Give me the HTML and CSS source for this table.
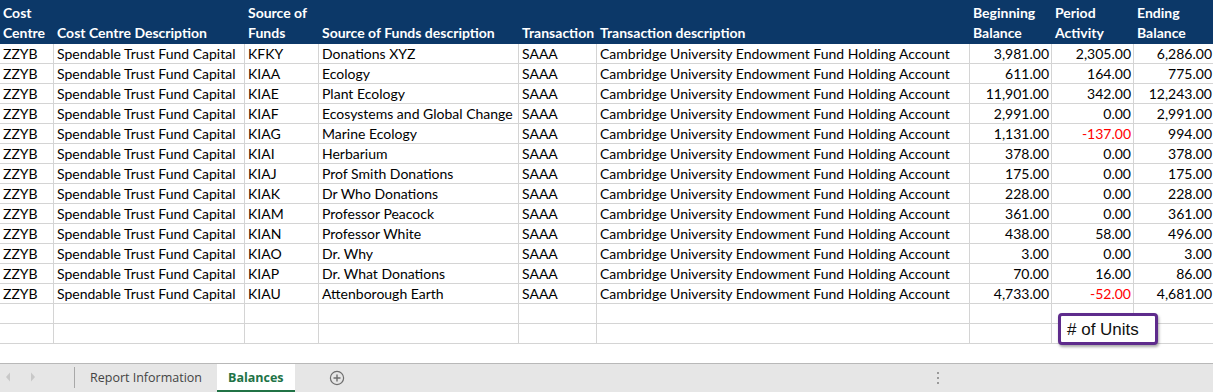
FILE: index.html
```html
<!DOCTYPE html>
<html>
<head>
<meta charset="utf-8">
<link rel="stylesheet" href="styles.css">
</head>
<body>
<div class="app">
  <div class="grid">
    <div class="row head">
      <div class="c">Cost<br>Centre</div>
      <div class="c">Cost Centre Description</div>
      <div class="c">Source of<br>Funds</div>
      <div class="c">Source of Funds description</div>
      <div class="c">Transaction</div>
      <div class="c">Transaction description</div>
      <div class="c">Beginning<br>Balance</div>
      <div class="c">Period<br>Activity</div>
      <div class="c">Ending<br>Balance</div>
    </div>
    <div class="row"><div class="c">ZZYB</div><div class="c">Spendable Trust Fund Capital</div><div class="c">KFKY</div><div class="c">Donations XYZ</div><div class="c">SAAA</div><div class="c">Cambridge University Endowment Fund Holding Account</div><div class="c n">3,981.00</div><div class="c n">2,305.00</div><div class="c n">6,286.00</div></div>
    <div class="row"><div class="c">ZZYB</div><div class="c">Spendable Trust Fund Capital</div><div class="c">KIAA</div><div class="c">Ecology</div><div class="c">SAAA</div><div class="c">Cambridge University Endowment Fund Holding Account</div><div class="c n">611.00</div><div class="c n">164.00</div><div class="c n">775.00</div></div>
    <div class="row"><div class="c">ZZYB</div><div class="c">Spendable Trust Fund Capital</div><div class="c">KIAE</div><div class="c">Plant Ecology</div><div class="c">SAAA</div><div class="c">Cambridge University Endowment Fund Holding Account</div><div class="c n">11,901.00</div><div class="c n">342.00</div><div class="c n">12,243.00</div></div>
    <div class="row"><div class="c">ZZYB</div><div class="c">Spendable Trust Fund Capital</div><div class="c">KIAF</div><div class="c">Ecosystems and Global Change</div><div class="c">SAAA</div><div class="c">Cambridge University Endowment Fund Holding Account</div><div class="c n">2,991.00</div><div class="c n">0.00</div><div class="c n">2,991.00</div></div>
    <div class="row"><div class="c">ZZYB</div><div class="c">Spendable Trust Fund Capital</div><div class="c">KIAG</div><div class="c">Marine Ecology</div><div class="c">SAAA</div><div class="c">Cambridge University Endowment Fund Holding Account</div><div class="c n">1,131.00</div><div class="c n neg">-137.00</div><div class="c n">994.00</div></div>
    <div class="row"><div class="c">ZZYB</div><div class="c">Spendable Trust Fund Capital</div><div class="c">KIAI</div><div class="c">Herbarium</div><div class="c">SAAA</div><div class="c">Cambridge University Endowment Fund Holding Account</div><div class="c n">378.00</div><div class="c n">0.00</div><div class="c n">378.00</div></div>
    <div class="row"><div class="c">ZZYB</div><div class="c">Spendable Trust Fund Capital</div><div class="c">KIAJ</div><div class="c">Prof Smith Donations</div><div class="c">SAAA</div><div class="c">Cambridge University Endowment Fund Holding Account</div><div class="c n">175.00</div><div class="c n">0.00</div><div class="c n">175.00</div></div>
    <div class="row"><div class="c">ZZYB</div><div class="c">Spendable Trust Fund Capital</div><div class="c">KIAK</div><div class="c">Dr Who Donations</div><div class="c">SAAA</div><div class="c">Cambridge University Endowment Fund Holding Account</div><div class="c n">228.00</div><div class="c n">0.00</div><div class="c n">228.00</div></div>
    <div class="row"><div class="c">ZZYB</div><div class="c">Spendable Trust Fund Capital</div><div class="c">KIAM</div><div class="c">Professor Peacock</div><div class="c">SAAA</div><div class="c">Cambridge University Endowment Fund Holding Account</div><div class="c n">361.00</div><div class="c n">0.00</div><div class="c n">361.00</div></div>
    <div class="row"><div class="c">ZZYB</div><div class="c">Spendable Trust Fund Capital</div><div class="c">KIAN</div><div class="c">Professor White</div><div class="c">SAAA</div><div class="c">Cambridge University Endowment Fund Holding Account</div><div class="c n">438.00</div><div class="c n">58.00</div><div class="c n">496.00</div></div>
    <div class="row"><div class="c">ZZYB</div><div class="c">Spendable Trust Fund Capital</div><div class="c">KIAO</div><div class="c">Dr. Why</div><div class="c">SAAA</div><div class="c">Cambridge University Endowment Fund Holding Account</div><div class="c n">3.00</div><div class="c n">0.00</div><div class="c n">3.00</div></div>
    <div class="row"><div class="c">ZZYB</div><div class="c">Spendable Trust Fund Capital</div><div class="c">KIAP</div><div class="c">Dr. What Donations</div><div class="c">SAAA</div><div class="c">Cambridge University Endowment Fund Holding Account</div><div class="c n">70.00</div><div class="c n">16.00</div><div class="c n">86.00</div></div>
    <div class="row"><div class="c">ZZYB</div><div class="c">Spendable Trust Fund Capital</div><div class="c">KIAU</div><div class="c">Attenborough Earth</div><div class="c">SAAA</div><div class="c">Cambridge University Endowment Fund Holding Account</div><div class="c n">4,733.00</div><div class="c n neg">-52.00</div><div class="c n">4,681.00</div></div>
    <div class="row"><div class="c"></div><div class="c"></div><div class="c"></div><div class="c"></div><div class="c"></div><div class="c"></div><div class="c"></div><div class="c"></div><div class="c"></div></div>
    <div class="row"><div class="c"></div><div class="c"></div><div class="c"></div><div class="c"></div><div class="c"></div><div class="c"></div><div class="c"></div><div class="c"></div><div class="c"></div></div>
    <div class="callout">#&nbsp;of Units</div>
  </div>
  <div class="tabbar">
    <div class="nav">
      <svg width="60" height="28" viewBox="0 0 60 28"><path d="M10 8.5 L6 13 L10 17.5 Z" fill="#c8c8c8"/><path d="M31 8.5 L35 13 L31 17.5 Z" fill="#c8c8c8"/></svg>
    </div>
    <div class="sep"></div>
    <div class="tab">Report Information</div>
    <div class="tab active">Balances</div>
    <div class="add">
      <svg width="16" height="16" viewBox="0 0 16 16"><circle cx="8" cy="8" r="6.6" fill="none" stroke="#6e6e6e" stroke-width="1.2"/><path d="M8 4.5 V11.5 M4.5 8 H11.5" stroke="#6e6e6e" stroke-width="1.4"/></svg>
    </div>
    <div class="split"><span></span><span></span><span></span></div>
  </div>
</div>
</body>
</html>
```
FILE: styles.css
```css
html, body {
  margin: 0;
  padding: 0;
  background: #ffffff;
}
.app {
  width: 1213px;
  height: 392px;
  overflow: hidden;
  display: flex;
  flex-direction: column;
  font-family: Lato, "Liberation Sans", sans-serif;
}
.grid {
  position: relative;
  height: 363px;
  overflow: hidden;
  flex: none;
}
.row {
  display: grid;
  grid-template-columns: 54px 191px 74px 200px 78px 373px 82px 82px 79px;
  height: 20px;
  width: 1213px;
}
.c {
  box-sizing: border-box;
  height: 20px;
  border-right: 1px solid #d4d4d4;
  border-bottom: 1px solid #d4d4d4;
  padding: 0 3px;
  font-size: 14px;
  line-height: 19px;
  color: #000;
  white-space: nowrap;
  overflow: hidden;
}
.c:last-child {
  border-right: none;
}
.c.n {
  text-align: right;
  padding-right: 2px;
}
.c.n:last-child {
  padding-right: 1px;
}
.c.neg {
  color: #ff0000;
}
.row.head {
  height: 44px;
  background: #0c3868;
}
.row.head .c {
  height: 44px;
  border: none;
  color: #ffffff;
  font-weight: bold;
  display: flex;
  align-items: flex-end;
  line-height: 20px;
  padding-bottom: 1px;
}
.callout {
  position: absolute;
  left: 1058px;
  top: 313px;
  width: 100px;
  height: 32px;
  box-sizing: border-box;
  border: 3px solid #5e2b8c;
  border-radius: 4px;
  background: #fff;
  box-shadow: 1px 2px 3px rgba(0,0,0,0.35);
  font-family: "Liberation Sans", Arial, sans-serif;
  font-size: 17px;
  line-height: 27px;
  padding-left: 6px;
  color: #111;
}
.tabbar {
  flex: 1;
  display: flex;
  align-items: stretch;
  background: #e6e6e6;
  border-top: 1px solid #b8b8b8;
  border-bottom: 1px solid #c8c8c8;
  font-family: "Open Sans", "Noto Sans", sans-serif;
  font-size: 12.5px;
}
.nav {
  width: 74px;
  display: flex;
  align-items: center;
}
.sep {
  width: 1px;
  margin: 3px 0 4px;
  background: #a8a8a8;
}
.tab {
  padding: 0 15px 2px;
  display: flex;
  align-items: center;
  color: #444;
}
.tab.active {
  background: #ffffff;
  color: #217346;
  font-weight: bold;
  border-bottom: 2px solid #217346;
  box-sizing: border-box;
  padding: 0 11px;
}
.add {
  margin-left: 34px;
  display: flex;
  align-items: center;
}
.split {
  margin-left: 592px;
  display: flex;
  flex-direction: column;
  justify-content: center;
  gap: 3px;
}
.split span {
  width: 2px;
  height: 2px;
  background: #9a9a9a;
}
```
